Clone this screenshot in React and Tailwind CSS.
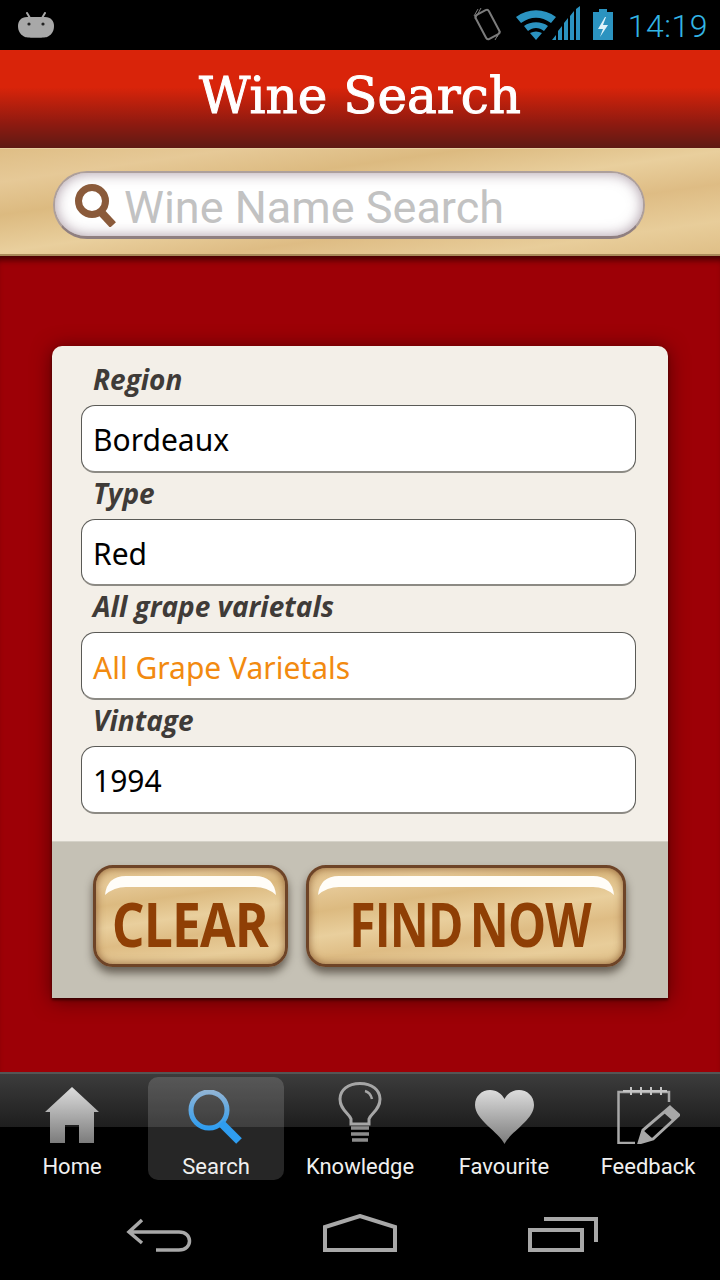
import React from 'react';

const wood =
  'bg-[linear-gradient(172deg,#dfbe86_0%,#e6c997_16%,#dcba80_32%,#e9cf9d_50%,#debc84_66%,#e8cd9a_84%,#dfbf87_100%)]';

const AndroidIcon = () => (
  <svg width="36" height="26" viewBox="0 0 36 26">
    <path d="M9 1l3 5M27 1l-3 5" stroke="#a8a8a8" strokeWidth="2" strokeLinecap="round" />
    <path d="M9 5h18c6 0 9 4 9 9 0 6-3 9-7 11-3 1-19 1-22 0-4-2-7-5-7-11 0-5 3-9 9-9z" fill="#a8a8a8" />
    <circle cx="11" cy="12" r="1.6" fill="#222" />
    <circle cx="25" cy="12" r="1.6" fill="#222" />
  </svg>
);

const StatusIcons = () => (
  <svg width="145" height="36" viewBox="0 0 145 36">
    {/* phone with vibrate ticks */}
    <g fill="none" stroke="#7c7c7c">
      <rect x="11" y="5" width="15" height="27" rx="2.5" strokeWidth="2" transform="rotate(-28 18.5 18.5)" />
      <path d="M9 3L5 10M12 2L6 13M28 31l3-6M26 34l5-9" strokeWidth="1" />
    </g>
    {/* wifi */}
    <path d="M47 11C59 2 75 2 87 11l-5 6C72 10 62 10 52 17z" fill="#2b93c0" />
    <path d="M55 20c7-5 17-5 24 0l-4 5c-5-4-11-4-16 0z" fill="#2b93c0" />
    <path d="M61 27c4-2 8-2 12 0l-6 7z" fill="#2b93c0" />
    {/* signal */}
    <path d="M83 34l4-5v5zM89 34v-9l4-5v14zM95 34V17l4-5v22zM101 34V10l4-5v29zM107 34V3l4-3v34z" fill="#2b93c0" />
    {/* battery */}
    <path d="M130 3h8v3h6v28h-20V6h6z" fill="#2b93c0" />
    <path d="M136 11l-7 12h5l-3 8 8-12h-5l3-8z" fill="#dff3fb" />
  </svg>
);

const SearchGlyph = () => (
  <svg width="44" height="44" viewBox="0 0 44 44">
    <circle cx="19" cy="18" r="13.5" fill="none" stroke="#8a5a3a" strokeWidth="7" />
    <path d="M28 29l12 13" stroke="#8a5a3a" strokeWidth="8" />
  </svg>
);

const Field = ({ label, value, orange }) => (
  <div className="flex flex-col">
    <div className="h-[46px] pb-[6px] pl-[12px] flex items-center font-['Open_Sans',sans-serif] text-[28px] font-bold italic text-[#3f3b38]">
      {label}
    </div>
    <div
      className={`h-[67.7px] rounded-[14px] border border-[#5a5a56] border-b-2 border-b-[#8c8a84] bg-white pl-[11px] pt-[3px] flex items-center font-['Noto_Sans',sans-serif] text-[30px] ${
        orange ? 'text-[#f28a10]' : 'text-black'
      }`}
    >
      {value}
    </div>
  </div>
);

const WoodButton = ({ text, width, textClass }) => (
  <button
    style={{ width }}
    className={`relative h-[102px] rounded-[20px] border-[3px] border-[#6e4427] shadow-[0_6px_8px_rgba(40,30,20,0.6),inset_0_0_9px_rgba(120,70,30,0.75)] ${wood} flex items-center justify-center`}
  >
    <svg className="absolute top-0 left-0" width={width - 6} height="40" viewBox={`0 0 ${width - 6} 40`}>
      <path
        d={`M9 27Q11 8 30 8H${width - 36}Q${width - 17} 8 ${width - 15} 27Q${width - 24} 19 ${width - 36} 19H30Q18 19 9 27Z`}
        fill="#fffdf8"
      />
    </svg>
    <span
      className={`relative mt-[16px] font-['Open_Sans',sans-serif] font-bold text-[60px] leading-none tracking-[-1px] text-[#8f3f05] whitespace-nowrap ${textClass}`}
    >
      {text}
    </span>
  </button>
);

const tabGray = 'url(#tabGray)';

const HomeIcon = () => (
  <svg width="54" height="57" viewBox="0 0 54 57">
    <path d="M27 0L54 25H49V56H34V38H20V56H5V25H0Z" fill={tabGray} />
  </svg>
);

const SearchTabIcon = () => (
  <svg width="56" height="54" viewBox="0 0 56 54">
    <defs>
      <linearGradient id="lens" x1="0" y1="0" x2="0" y2="1">
        <stop offset="0" stopColor="#8fb4d6" />
        <stop offset="1" stopColor="#2f9df0" />
      </linearGradient>
    </defs>
    <circle cx="21" cy="20" r="18" fill="none" stroke="url(#lens)" strokeWidth="5" />
    <path d="M33 33L51 51" stroke="#2f9df0" strokeWidth="8" />
  </svg>
);

const BulbIcon = () => (
  <svg width="44" height="62" viewBox="0 0 44 62">
    <path
      d="M13 42V37C11 31 2 28 2 17 2 8 10 1.500 22 1.500S42 8 42 17c0 11-9 14-11 20v5z"
      fill="none"
      stroke="#a6a6a6"
      strokeWidth="3"
    />
    <path d="M27 9c4 1 6 4 7 8" fill="none" stroke="#a6a6a6" strokeWidth="2.5" />
    <path d="M13 46h18M13 52h18M14 58h16" stroke="#8c8c8c" strokeWidth="3.500" />
  </svg>
);

const HeartIcon = () => (
  <svg width="59" height="54" viewBox="0 0 59 54">
    <path d="M29.500 54C24 42 0 30 0 15 0 6 7 0 15 0c7 0 12 4 14.500 9C32 4 37 0 44 0c8 0 15 6 15 15 0 15-24 27-29.500 39z" fill={tabGray} />
  </svg>
);

const NoteIcon = () => (
  <svg width="63" height="57" viewBox="0 0 63 57">
    <path d="M52 15V5H1.500V56H18" fill="none" stroke="#a8a8a8" strokeWidth="2.500" />
    <path d="M14 0v8M24 0v8M34 0v8M44 0v8M6 4h44" stroke="#c4c4c4" strokeWidth="2" />
    <path d="M53 20L62 28 36 52 22 56 26 43Z" fill="none" stroke="#a8a8a8" strokeWidth="3" />
    <path d="M53 20L62 28 56 34 47 26Z" fill="#a8a8a8" />
    <path d="M26 43L22 56 36 52Z" fill="#a8a8a8" />
  </svg>
);

const tabs = [
  { label: 'Home', icon: <HomeIcon /> },
  { label: 'Search', icon: <SearchTabIcon />, active: true },
  { label: 'Knowledge', icon: <BulbIcon /> },
  { label: 'Favourite', icon: <HeartIcon /> },
  { label: 'Feedback', icon: <NoteIcon /> },
];

const App = () => {
  return (
    <div className="w-[720px] h-[1280px] flex flex-col overflow-hidden bg-black">
      {/* status bar */}
      <div className="h-[50px] shrink-0 bg-black flex items-center pl-[18px] pr-[12px] justify-between">
        <AndroidIcon />
        <div className="flex items-center gap-[14px]">
          <div className="-mt-[3px]">
            <StatusIcons />
          </div>
          <span className="font-['Roboto',sans-serif] font-light text-[32px] tracking-[0.5px] text-[#33b5e5] mt-[1px]">14:19</span>
        </div>
      </div>

      {/* title */}
      <div className="h-[98px] shrink-0 bg-[linear-gradient(#d9240a_0%,#d9240a_38%,#8f1a10_75%,#5e1a14_100%)] flex items-center justify-center pb-[5px]">
        <h1 className="font-['DejaVu_Serif',serif] text-[50px] text-white [-webkit-text-stroke:1px_white]">Wine Search</h1>
      </div>

      {/* search strip */}
      <div className={`h-[108px] shrink-0 ${wood} border-t border-[#e8cfa0] border-b-2 border-b-[#a98a5a] pl-[53px] pt-[22px]`}>
        <div className="w-[592px] h-[68px] rounded-full bg-white border-2 border-[#ad9f9c] border-b-[3px] border-b-[#8f7f80] shadow-[inset_0_0_14px_rgba(100,70,90,0.55)] flex items-center pl-[18px] gap-[7px]">
          <SearchGlyph />
          <span className="font-['Roboto',sans-serif] text-[45px] text-[#c2c2c2] mt-[7px]">Wine Name Search</span>
        </div>
      </div>

      {/* red body */}
      <div className="flex-1 bg-[#9d0006] shadow-[inset_0_8px_6px_-4px_rgba(40,0,0,0.75)] pt-[90px] px-[52px]">
        <div className="w-[616px] rounded-t-[10px] overflow-hidden shadow-[0_2px_3px_rgba(40,0,0,0.8),0_2px_20px_rgba(50,0,0,0.7)]">
          <div className="h-[495px] bg-[#f3efe8] pl-[29px] pr-[32px] pt-[13px] flex flex-col">
            <Field label="Region" value="Bordeaux" />
            <Field label="Type" value="Red" />
            <Field label="All grape varietals" value="All Grape Varietals" orange />
            <Field label="Vintage" value="1994" />
          </div>
          <div className="h-[157px] bg-[#c5c1b5] border-t border-[#d5d2c8] pl-[41px] pt-[23px] flex gap-[18px]">
            <WoodButton text="CLEAR" width={195} textClass="scale-x-[0.86] -translate-x-[1px]" />
            <WoodButton text="FIND NOW" width={320} textClass="scale-x-[0.8] translate-x-[4px] [word-spacing:-6px]" />
          </div>
        </div>
      </div>

      {/* tab bar */}
      <svg width="0" height="0" className="absolute">
        <defs>
          <linearGradient id="tabGray" x1="0" y1="0" x2="0" y2="1">
            <stop offset="0" stopColor="#dcdcdc" />
            <stop offset="1" stopColor="#7c7c7c" />
          </linearGradient>
        </defs>
      </svg>
      <div className="h-[108px] shrink-0 border-t-2 border-[#555] bg-[linear-gradient(#3c3c3c_0%,#1e1e1e_50%,#000_50%,#000_100%)] grid grid-cols-5">
        {tabs.map((tab) => (
          <div key={tab.label} className="h-full pt-[3px] px-[4px]">
            <div
              className={`h-[103px] rounded-[10px] flex flex-col items-center ${
                tab.active ? 'bg-white/15' : ''
              }`}
            >
              <div className="h-[70px] flex items-end justify-center">{tab.icon}</div>
              <span className="mt-[10px] font-['Roboto',sans-serif] text-[22px] text-[#f0f0f0] leading-[26px]">{tab.label}</span>
            </div>
          </div>
        ))}
      </div>

      {/* nav bar */}
      <div className="h-[100px] shrink-0 bg-black grid grid-cols-[270px_180px_270px] items-start pt-[33px]">
        <div className="pl-[126px] pt-[4px]">
          <svg width="68" height="36" viewBox="0 0 68 36">
            <path d="M16 3L3 15l13 11M3 15h50c14 0 14 18 0 18H30" fill="none" stroke="#a8a8a8" strokeWidth="3.500" />
          </svg>
        </div>
        <div className="flex justify-center pt-[1px]">
          <svg width="74" height="38" viewBox="0 0 74 38">
            <path d="M2 36V13L37 2l35 11v23z" fill="none" stroke="#a8a8a8" strokeWidth="4" />
          </svg>
        </div>
        <div className="flex justify-start pl-[78px] pt-[3px]">
          <svg width="70" height="36" viewBox="0 0 70 36">
            <path d="M2 14h52v20H2z" fill="none" stroke="#a8a8a8" strokeWidth="4" />
            <path d="M16 3h52v23" fill="none" stroke="#a8a8a8" strokeWidth="4" />
          </svg>
        </div>
      </div>
    </div>
  );
};

export default App;
